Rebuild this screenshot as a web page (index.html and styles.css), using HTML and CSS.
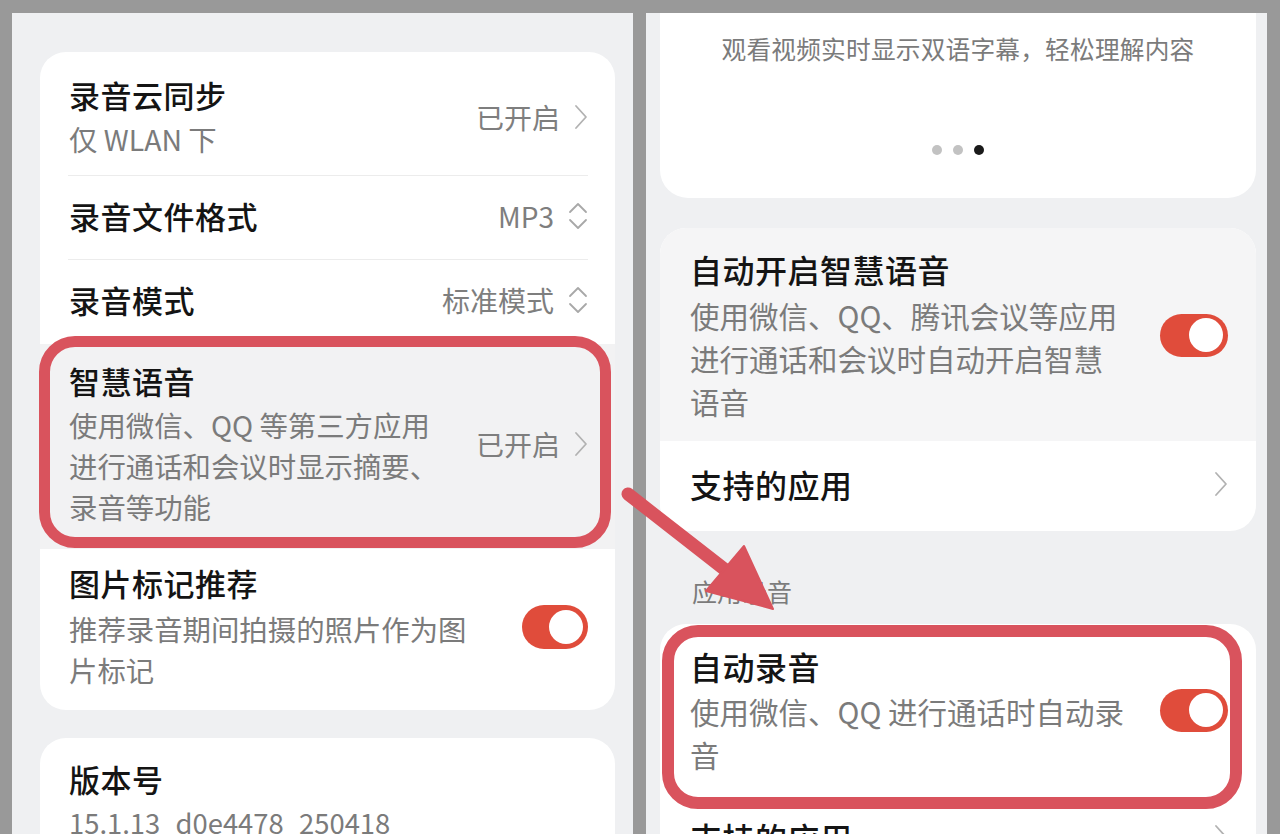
FILE: index.html
```html
<!DOCTYPE html>
<html lang="zh-CN">
<head>
<meta charset="utf-8">
<title>录音设置</title>
<link rel="stylesheet" href="styles.css">
</head>
<body>
<div class="screen">
  <div class="panel panel-left">
    <div class="card">
      <div class="row row-first divided">
        <div class="texts">
          <div class="title">录音云同步</div>
          <div class="sub">仅 WLAN 下</div>
        </div>
        <div class="value">已开启<svg class="chev" viewBox="0 0 14 26"><path d="M2 2 L12 13 L2 24"/></svg></div>
      </div>
      <div class="row row-single divided">
        <div class="title">录音文件格式</div>
        <div class="value">MP3<svg class="updown" viewBox="0 0 20 28"><path d="M2 10 L10 2 L18 10 M2 18 L10 26 L18 18"/></svg></div>
      </div>
      <div class="row row-single">
        <div class="title">录音模式</div>
        <div class="value">标准模式<svg class="updown" viewBox="0 0 20 28"><path d="M2 10 L10 2 L18 10 M2 18 L10 26 L18 18"/></svg></div>
      </div>
      <div class="row row-smart">
        <div class="texts">
          <div class="title">智慧语音</div>
          <div class="sub">使用微信、QQ 等第三方应用<br>进行通话和会议时显示摘要、<br>录音等功能</div>
        </div>
        <div class="value">已开启<svg class="chev" viewBox="0 0 14 26"><path d="M2 2 L12 13 L2 24"/></svg></div>
        <div class="mark mark-left"></div>
      </div>
      <div class="row row-photo">
        <div class="texts">
          <div class="title">图片标记推荐</div>
          <div class="sub">推荐录音期间拍摄的照片作为图<br>片标记</div>
        </div>
        <div class="toggle"><span class="thumb"></span></div>
      </div>
    </div>
    <div class="card card-version">
      <div class="row row-version">
        <div class="texts">
          <div class="title">版本号</div>
          <div class="sub sub-version">15.1.13_d0e4478_250418</div>
        </div>
      </div>
    </div>
  </div>

  <div class="panel panel-right">
    <div class="card card-top">
      <div class="caption">观看视频实时显示双语字幕，轻松理解内容</div>
      <div class="dots"><span class="dot"></span><span class="dot"></span><span class="dot on"></span></div>
    </div>
    <div class="card card-auto">
      <div class="rrow rrow-auto">
        <div class="texts">
          <div class="rtitle">自动开启智慧语音</div>
          <div class="rsub">使用微信、QQ、腾讯会议等应用<br>进行通话和会议时自动开启智慧<br>语音</div>
        </div>
        <div class="toggle toggle-r"><span class="thumb"></span></div>
      </div>
      <div class="rrow rrow-link">
        <div class="rtitle">支持的应用</div>
        <svg class="chev" viewBox="0 0 14 26"><path d="M2 2 L12 13 L2 24"/></svg>
      </div>
    </div>
    <div class="section-head">应用录音</div>
    <div class="card card-rec">
      <div class="rrow rrow-rec">
        <div class="texts">
          <div class="rtitle">自动录音</div>
          <div class="rsub">使用微信、QQ 进行通话时自动录<br>音</div>
        </div>
        <div class="toggle toggle-r"><span class="thumb"></span></div>
      </div>
      <div class="rrow rrow-link">
        <div class="rtitle">支持的应用</div>
        <svg class="chev" viewBox="0 0 14 26"><path d="M2 2 L12 13 L2 24"/></svg>
      </div>
      <div class="mark mark-right"></div>
    </div>
  </div>

  <svg class="arrow" viewBox="0 0 1280 834" width="1280" height="834">
    <line x1="628" y1="494" x2="728" y2="572" class="arrow-line"/>
    <polygon points="773,609 706,591 744,546" class="arrow-head"/>
  </svg>
</div>
</body>
</html>
```

FILE: styles.css
```css
* { box-sizing: border-box; }
html, body { margin: 0; padding: 0; }
body {
  width: 1280px;
  height: 834px;
  overflow: hidden;
  background: #999999;
  font-family: "Noto Sans CJK SC", "Noto Sans", sans-serif;
}
.screen {
  position: relative;
  width: 1280px;
  height: 834px;
  display: flex;
  gap: 13px;
  padding: 13px 0 0 12px;
}
.panel {
  width: 621px;
  height: 821px;
  overflow: hidden;
  background: #eff0f2;
  display: flex;
  flex-direction: column;
}
.panel-left { padding: 39px 18px 0 28px; }
.panel-right { padding: 0 11px 0 14px; }

.card {
  background: #ffffff;
  border-radius: 26px;
  position: relative;
  flex-shrink: 0;
}

/* left rows */
.row {
  position: relative;
  display: flex;
  align-items: center;
  justify-content: space-between;
  padding: 0 27px 0 29px;
}
.divided::after {
  content: "";
  position: absolute;
  left: 28px;
  right: 27px;
  bottom: 0;
  height: 1px;
  background: #ececec;
}
.texts { display: flex; flex-direction: column; gap: 3px; }
.title {
  font-size: 31px;
  line-height: 40px;
  font-weight: 500;
  color: #141414;
  letter-spacing: 0.5px;
}
.sub {
  font-size: 28.4px;
  line-height: 41px;
  color: #7b7b7b;
}
.sub-version { font-size: 27.4px; }
.value {
  display: flex;
  align-items: center;
  gap: 14px;
  font-size: 28px;
  color: #7e7e7e;
  line-height: 40px;
}
.chev { width: 14px; height: 26px; flex-shrink: 0; }
.chev path { fill: none; stroke: #b2b2b2; stroke-width: 1.8; stroke-linecap: round; stroke-linejoin: round; }
.updown { width: 20px; height: 28px; flex-shrink: 0; }
.updown path { fill: none; stroke: #a8a8a8; stroke-width: 1.8; stroke-linecap: round; stroke-linejoin: round; }

.row-first { padding-top: 23px; padding-bottom: 17px; }
.row-single { height: 84px; padding-bottom: 4px; }
.row-smart { padding-top: 17px; padding-bottom: 22px; background: #f2f2f3; }
.row-photo { padding-top: 14px; padding-bottom: 20px; }
.row-photo .texts { gap: 5px; }
.card-version { margin-top: 28px; }
.row-version { padding-top: 21px; padding-bottom: 30px; }

.toggle {
  width: 66px;
  height: 44px;
  border-radius: 22px;
  background: #e04c3b;
  position: relative;
  flex-shrink: 0;
}
.thumb {
  position: absolute;
  right: 5px;
  top: 5px;
  width: 34px;
  height: 34px;
  border-radius: 50%;
  background: #ffffff;
}
.toggle-r { width: 68px; height: 43px; }
.toggle-r .thumb { top: 4.5px; }

/* annotation boxes */
.mark {
  position: absolute;
  border-style: solid;
  border-color: #d9535d;
  pointer-events: none;
}
.mark-left {
  left: -1px;
  top: -8px;
  width: 572px;
  height: 212px;
  border-width: 11px;
  border-radius: 36px;
}
.mark-right {
  left: 2px;
  top: 1px;
  width: 580px;
  height: 184px;
  border-width: 12px;
  border-radius: 36px;
}

/* right panel */
.card-top {
  height: 185px;
  border-radius: 0 0 28px 28px;
  display: flex;
  flex-direction: column;
  align-items: center;
  padding-top: 17px;
}
.caption {
  font-size: 24.7px;
  line-height: 36px;
  color: #7b7b7b;
  letter-spacing: 0.2px;
}
.dots { display: flex; gap: 11px; margin-top: 79px; }
.dot { width: 10px; height: 10px; border-radius: 50%; background: #c2c2c2; }
.dot.on { background: #1a1a1a; }

.card-auto {
  margin-top: 30px;
  overflow: hidden;
}
.rrow {
  display: flex;
  align-items: center;
  justify-content: space-between;
  padding: 0 28px 0 30px;
}
.rtitle {
  font-size: 32px;
  line-height: 42px;
  font-weight: 500;
  color: #141414;
  letter-spacing: 0.5px;
}
.rsub {
  font-size: 29.5px;
  line-height: 43px;
  color: #7b7b7b;
}
.rrow .texts { gap: 3.5px; }
.rrow-auto { background: #f5f5f6; padding-top: 20px; padding-bottom: 18px; }
.rrow-link { height: 90px; padding-bottom: 4px; }
.rrow-rec { padding-top: 21px; padding-bottom: 18px; }
.section-head {
  font-size: 25px;
  line-height: 36px;
  color: #7b7b7b;
  padding-left: 32px;
  margin-top: 42px;
}
.card-rec { margin-top: 15px; }

.arrow {
  position: absolute;
  left: 0;
  top: 0;
  pointer-events: none;
}
.arrow-line { stroke: #d9535d; stroke-width: 13; stroke-linecap: round; }
.arrow-head { fill: #d9535d; stroke: #d9535d; stroke-width: 2; stroke-linejoin: round; }
```
